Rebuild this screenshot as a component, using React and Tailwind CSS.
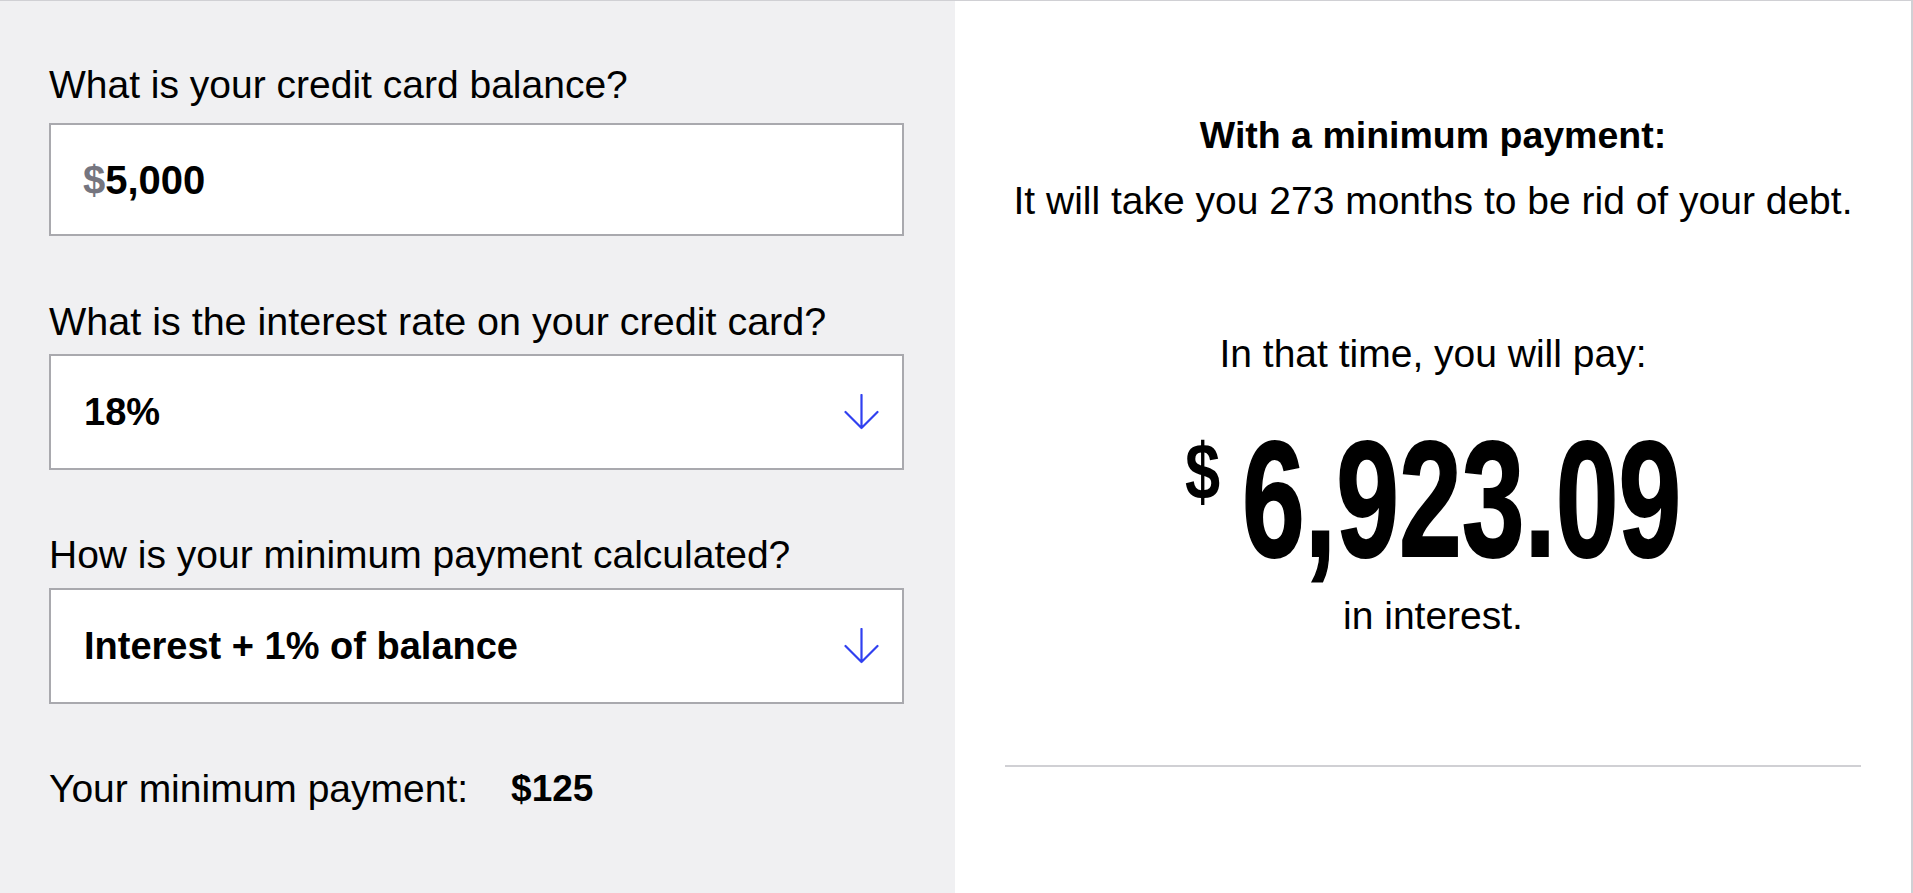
import React from "react";

function DownArrow() {
  return (
    <svg width="35" height="36" viewBox="0 0 35 36" fill="none" className="shrink-0">
      <path d="M17.5 1 V34 M1.5 18 L17.5 34 L33.5 18" stroke="#3040f0" strokeWidth="2.2" strokeLinecap="round" strokeLinejoin="round" />
    </svg>
  );
}

function SelectBox({ value }) {
  return (
    <div className="h-[116px] bg-white border-2 border-[#a9a9ae] flex items-center justify-between pl-[33px] pr-[23px]">
      <span className="text-[38px] leading-[44px] font-bold text-black whitespace-nowrap">{value}</span>
      <DownArrow />
    </div>
  );
}

export default function App() {
  return (
    <div className="w-[1913px] h-[893px] flex border-t border-[#d0d0d4] font-['Liberation_Sans',Arial,sans-serif] text-black overflow-hidden">
      {/* Left panel */}
      <div className="w-[955px] shrink-0 bg-[#f0f0f2] pl-[49px] pr-[51px] pt-[62px] flex flex-col">
        <div className="text-[39px] leading-[44px] whitespace-nowrap">What is your credit card balance?</div>
        <div className="mt-[16px] h-[113px] bg-white border-2 border-[#a9a9ae] flex items-center pl-[32px]">
          <span className="text-[40px] leading-[44px] font-bold whitespace-nowrap">
            <span className="text-[#75757f]">$</span>5,000
          </span>
        </div>

        <div className="mt-[63px] text-[39.5px] leading-[44px] whitespace-nowrap">What is the interest rate on your credit card?</div>
        <div className="mt-[11px]">
          <SelectBox value="18%" />
        </div>

        <div className="mt-[63px] text-[39px] leading-[44px] whitespace-nowrap">How is your minimum payment calculated?</div>
        <div className="mt-[11px]">
          <SelectBox value="Interest + 1% of balance" />
        </div>

        <div className="mt-[63px] flex items-center text-[39px] leading-[44px] whitespace-nowrap">
          <span>Your minimum payment:</span>
          <span className="ml-[43px] text-[37px] font-bold">$125</span>
        </div>
      </div>

      {/* Right panel */}
      <div className="flex-1 bg-white border-r-2 border-[#d0d0d4] px-[50px] pt-[112px] flex flex-col items-stretch">
        <div className="text-center text-[37.5px] leading-[44px] font-bold whitespace-nowrap">With a minimum payment:</div>
        <div className="mt-[22px] text-center text-[39px] leading-[44px] whitespace-nowrap">It will take you 273 months to be rid of your debt.</div>
        <div className="mt-[109px] text-center text-[39px] leading-[44px] whitespace-nowrap">In that time, you will pay:</div>

        <div className="mt-[40px] flex justify-center items-start">
          <span className="w-[36px] shrink-0 mt-[16px] text-[79px] leading-none font-bold whitespace-nowrap">
            <span className="inline-block origin-left scale-x-[0.8]">$</span>
          </span>
          <span className="ml-[21px] w-[440px] shrink-0 text-[166px] leading-none font-bold whitespace-nowrap [-webkit-text-stroke:2px_black]">
            <span className="inline-block origin-left scale-x-[0.68]">6,923.09</span>
          </span>
        </div>

        <div className="mt-[12px] text-center text-[39px] leading-[44px] whitespace-nowrap">in interest.</div>

        <div className="mt-[127px] h-[2px] bg-[#d0d0d4]"></div>
      </div>
    </div>
  );
}
